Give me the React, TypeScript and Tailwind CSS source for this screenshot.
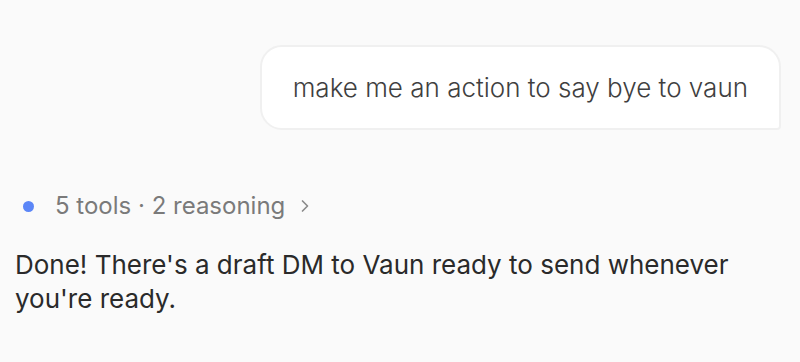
import { ChevronRight } from "lucide-react";

const App = () => {
  return (
    <div
      className="w-[800px] h-[362px] bg-[#fafafa] overflow-hidden"
      style={{ fontFamily: "Inter, 'Liberation Sans', sans-serif" }}
    >
      <div className="flex flex-col pl-[15px] pr-[19px] pt-[45px]">
        <div className="flex justify-end">
          <div className="bg-white border-2 border-[#f0f0f0] rounded-[22px] rounded-br-[4px] px-[31px] py-[24px] text-[26px] leading-[33px] font-light text-[#3f3f3f]">
            make me an action to say bye to vaun
          </div>
        </div>

        <div className="mt-[62px] flex items-center pl-[8px] text-[24px] leading-[28px] text-[#7a7a7a]">
          <span className="w-[11px] h-[11px] rounded-full bg-[#5b86f7]" />
          <span className="ml-[21px]">5 tools · 2 reasoning</span>
          <ChevronRight className="ml-[10px] w-[20px] h-[20px] text-[#8a8a8a]" strokeWidth={2} />
        </div>

        <p className="mt-[28px] text-[26px] leading-[34px] text-[#2a2a2a] max-w-[740px]">
          Done! There's a draft DM to Vaun ready to send whenever you're ready.
        </p>
      </div>
    </div>
  );
};

export default App;
